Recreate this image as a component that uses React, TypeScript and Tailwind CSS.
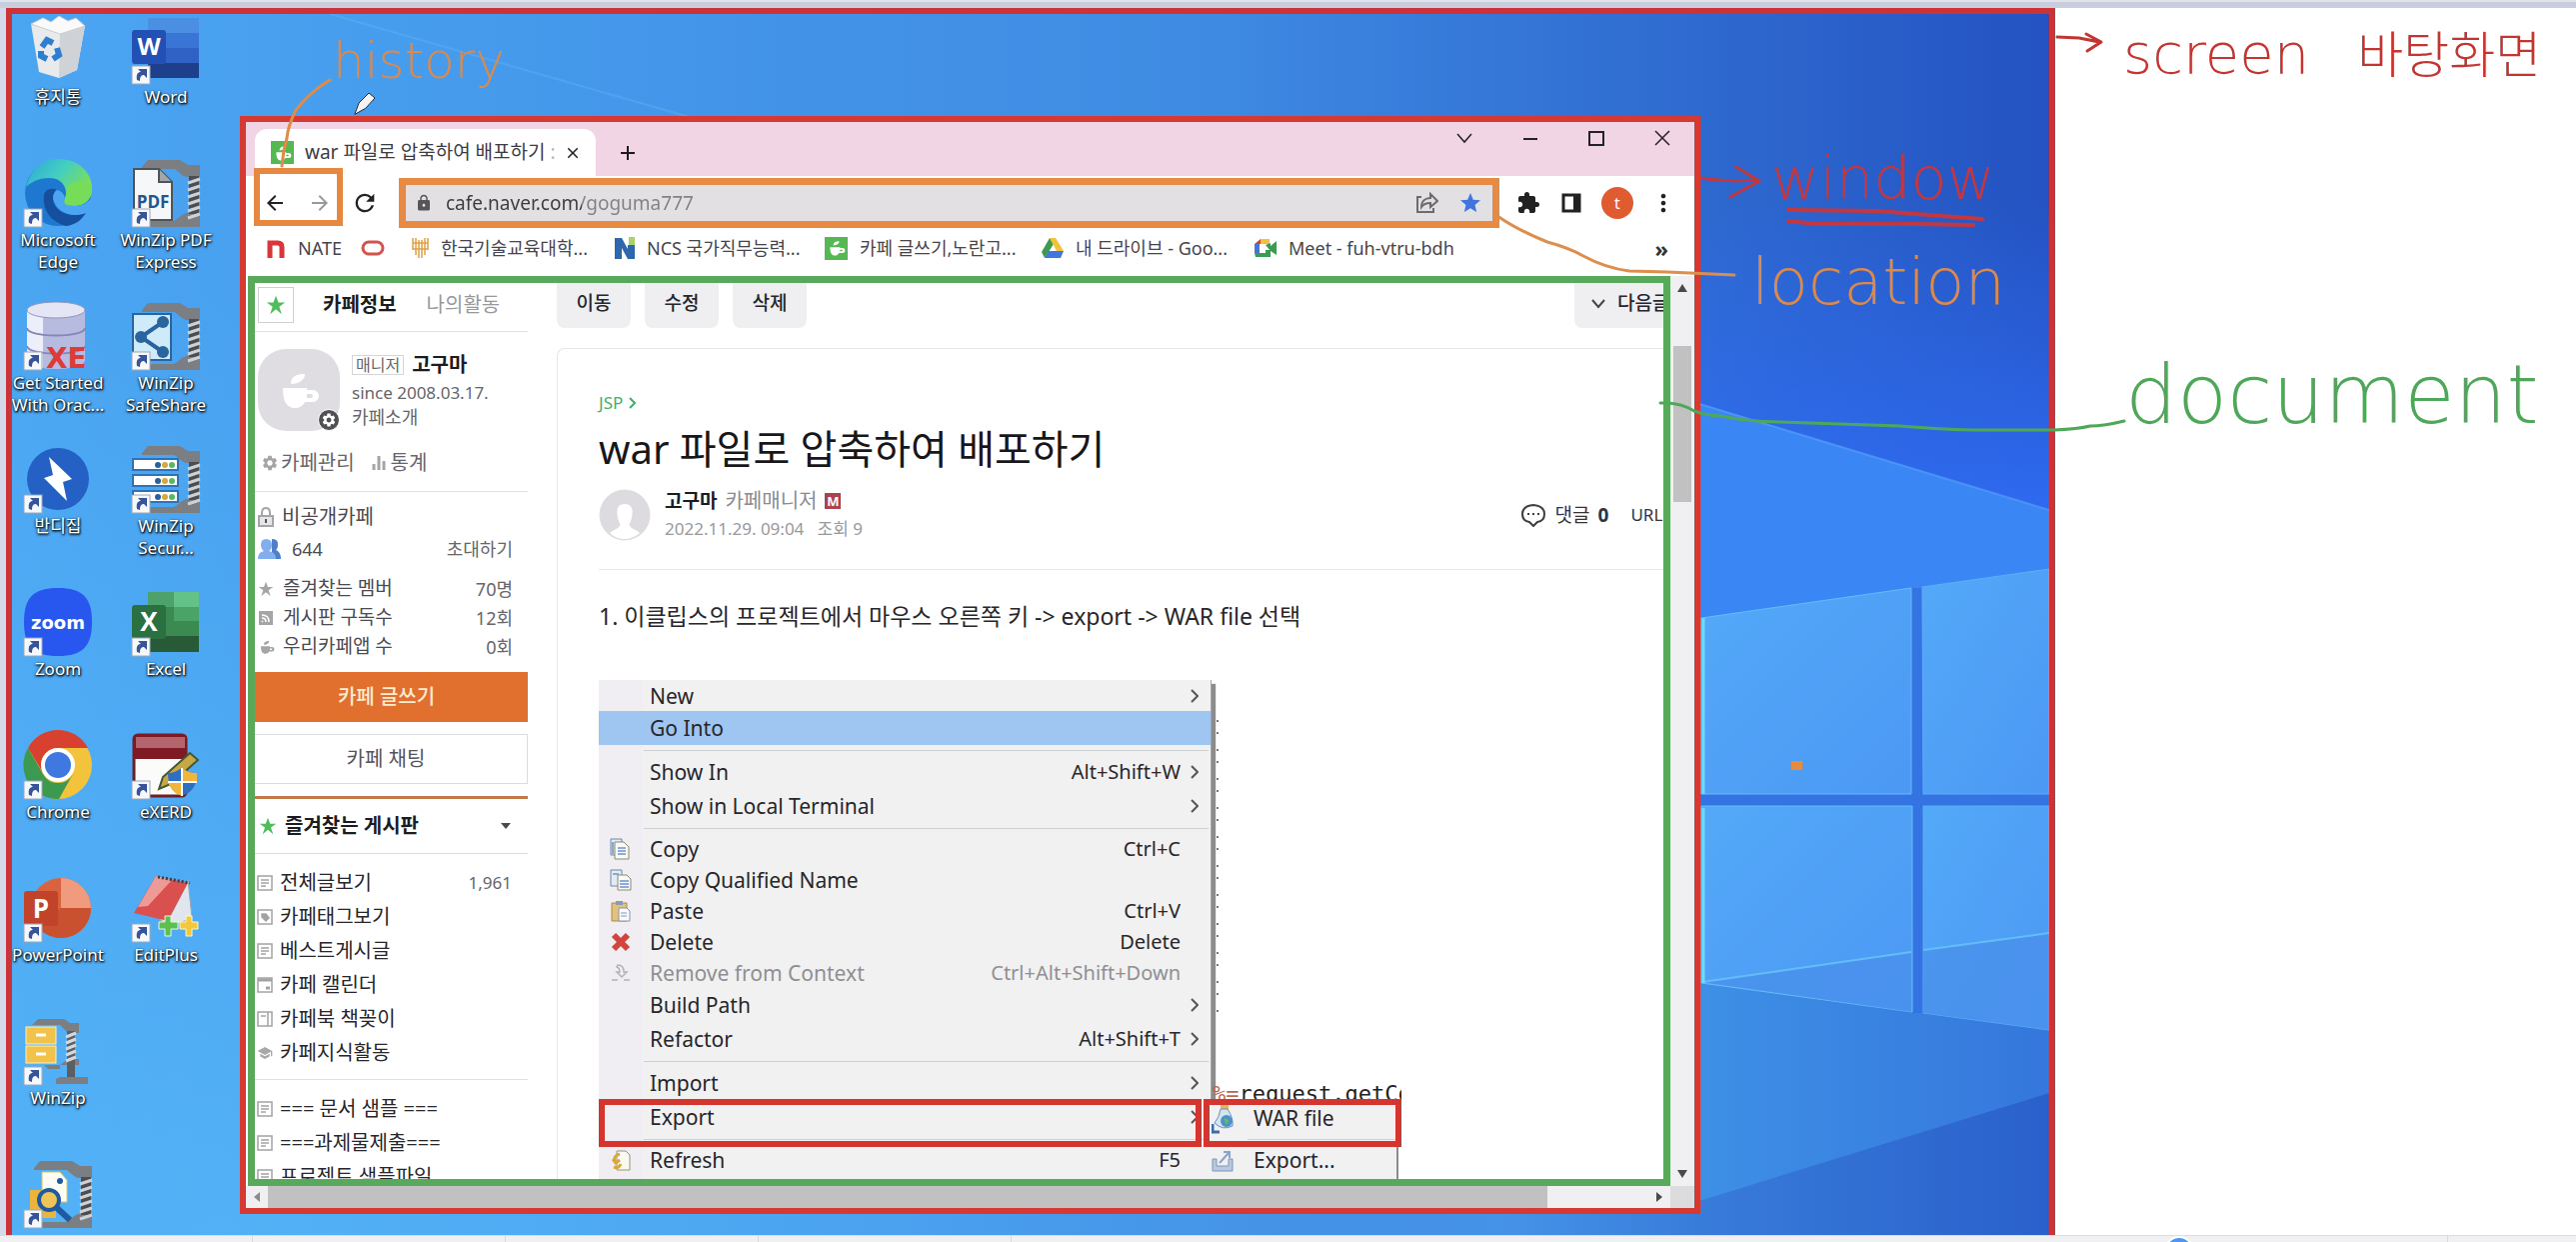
import React from "react";
import {
  MdAdd,
  MdArrowBack,
  MdArrowForward,
  MdClose,
  MdExtension,
  MdLock,
  MdMoreVert,
  MdRefresh,
  MdSchool,
  MdSettings,
  MdStar,
} from "react-icons/md";

/* ---------- desktop icons ---------- */

const Shortcut = () => (
  <g>
    <rect x="0" y="50" width="18" height="18" fill="#f7f8fa" stroke="#9aa9bb" strokeWidth="1" />
    <path d="M5 64c-1-6 1-8 4-8l-3-3h9v9l-3-3c-3 0-4 2-4 6z" fill="#36549a" />
  </g>
);

const IconBox = ({ children, plain }: { children: React.ReactNode; plain?: boolean }) => (
  <svg viewBox="0 0 68 68" className="size-[68px] shrink-0 overflow-visible">
    {children}
    {!plain && <Shortcut />}
  </svg>
);

const Clamp = () => (
  <g>
    <path d="M10 8 16 1h32l8 5h12v12H54c-6-2-8-7-12-8H10z" fill="#7b7e82" />
    <path d="M10 68h48l-2 0h12V54H54c-5 2-8 6-12 8H16z" fill="#7b7e82" />
    <rect x="57" y="17" width="10" height="38" fill="#4b4d50" />
    <path d="m56 24 12-4m-12 11 12-4m-12 11 12-4m-12 11 12-4m-12 11 12-4m-12 11 12-4" stroke="#cfd2d5" strokeWidth="3" />
  </g>
);

const TrashIcon = () => (
  <IconBox plain>
    <path d="m7 8 54 2-8 44-18 8-20-6z" fill="#e9eaec" />
    <path d="M36 14 61 10l-8 44-18 8z" fill="#cfd2d6" />
    <path d="m7 8 12-6 8 4 8-6 9 5 8-3 9 8-25 8z" fill="#fafafa" stroke="#c9ccd0" strokeWidth="1" />
    <path d="m18 31 5-7 6 3m4 5 2 7-6 4m-6 0-6-3 0-5" fill="none" stroke="#2f7fd0" strokeWidth="6" />
  </IconBox>
);
const EdgeIcon = () => (
  <IconBox>
    <defs>
      <linearGradient id="edgeTop" x1="0" x2="1" y1="0" y2="0.6">
        <stop offset="0" stopColor="#2ba6dc" />
        <stop offset="0.5" stopColor="#43cfc0" />
        <stop offset="1" stopColor="#86e04b" />
      </linearGradient>
    </defs>
    <circle cx="34" cy="34" r="33" fill="#1e78cf" />
    <path d="M2 28C7 8 21 0 35 0c20 0 33 14 33 29 0 12-8 18-18 17-9 0-11-3-9-7 3-6 0-20-16-20C14 19 6 24 2 28z" fill="url(#edgeTop)" />
    <path d="M20 36c-2 16 8 27 22 31 10-1 17-7 21-15-18 9-34 0-34-13 0-4 2-7 4-8-6-3-12 0-13 5z" fill="#174f9f" />
    <path d="M41 40c-2 4 1 7 9 7 8 0 14-3 17-8l1 12-6 3c-16 6-31-2-33-15 0-4 2-7 4-8 5 1 8 5 8 9z" fill="#4ba5f2" />
    <path d="M41 40c-2 4 0 7 9 7 10 0 18-6 18-17l-6-8-14 2c-7 4-4 10-7 16z" fill="#77dc58" />
  </IconBox>
);
const OracleIcon = () => (
  <IconBox>
    <path d="M3 8v50c0 12 58 12 58 0V8z" fill="#b7bbdf" />
    <path d="M3 8v50c0 4 7 7 16 8V12z" fill="#eceefa" />
    <ellipse cx="32" cy="8" rx="29" ry="8" fill="#e4e6f6" stroke="#8f93be" />
    <path d="M3 26c0 10 58 10 58 0M3 44c0 10 58 10 58 0" fill="none" stroke="#8387b8" strokeWidth="2" />
    <text x="22" y="66" className="font-['DejaVu_Sans'] text-[28px] font-bold" fill="#dc3b38">XE</text>
  </IconBox>
);
const BandizipIcon = () => (
  <IconBox>
    <circle cx="34" cy="34" r="31" fill="#2560c4" />
    <path d="m25 12 23 22-9 3 4 19-23-23 9-3z" fill="#fff" />
  </IconBox>
);
const ZoomIcon = () => (
  <IconBox>
    <path d="M34 0c25 0 34 10 34 34S59 68 34 68 0 58 0 34 9 0 34 0z" fill="#2757ee" />
    <text x="34" y="41" textAnchor="middle" className="font-['DejaVu_Sans'] text-[18px] font-bold" fill="#fff">zoom</text>
  </IconBox>
);
const ChromeIcon = () => (
  <IconBox>
    <circle cx="34" cy="34" r="34" fill="#f3c33c" />
    <path d="M4 17A34 34 0 0 1 64 17H34A17 17 0 0 0 19 42z" fill="#d8412f" />
    <path d="M4 17A34 34 0 0 0 35 68L49 43A17 17 0 0 1 19 43z" fill="#3c9a50" />
    <circle cx="34" cy="34" r="17" fill="#fff" />
    <circle cx="34" cy="34" r="13" fill="#3f78e0" />
  </IconBox>
);
const PowerPointIcon = () => (
  <IconBox>
    <circle cx="37" cy="34" r="30" fill="#d9623f" />
    <path d="M37 4a30 30 0 0 1 30 30H37z" fill="#f09a7e" />
    <path d="M37 34h30a30 30 0 0 1-56 15z" fill="#c9512f" />
    <rect x="0" y="17" width="34" height="35" rx="3" fill="#c0432a" />
    <text x="17" y="44" textAnchor="middle" className="font-['Open_Sans'] text-[26px] font-bold" fill="#fff">P</text>
  </IconBox>
);
const WinZipIcon = () => (
  <IconBox>
    <path d="M8 8 14 2h26l6 4h9v10H44L36 8z" fill="#7b7e82" />
    <path d="M20 48h35v-6H44l-8 6v4H24zM36 60h28v7H32v-5z" fill="#7b7e82" />
    <rect x="43" y="14" width="8" height="46" fill="#5b5e62" />
    <path d="m42 20 10-4m-10 10 10-4m-10 10 10-4m-10 10 10-4m-10 10 10-4" stroke="#d5d8db" strokeWidth="3" />
    <rect x="2" y="10" width="30" height="17" fill="#f2c34a" stroke="#fff1bd" strokeWidth="1" />
    <rect x="2" y="29" width="30" height="17" fill="#f2c34a" stroke="#fff1bd" strokeWidth="1" />
    <path d="M12 18h10M12 37h10" stroke="#fff" strokeWidth="3" />
  </IconBox>
);
const WinZipSearchIcon = () => (
  <IconBox>
    <Clamp />
    <path d="M18 12h18l7 8v22H18z" fill="#fdfdf5" stroke="#d6c36c" />
    <path d="M6 30h26v28H6z" fill="#eab53e" />
    <circle cx="25" cy="40" r="10" fill="#f0c558" stroke="#1f5aa0" strokeWidth="4" />
    <path d="m33 48 13 12" stroke="#1f5aa0" strokeWidth="6" />
    <circle cx="36" cy="21" r="3" fill="#1f5aa0" />
  </IconBox>
);
const WordIcon = () => (
  <IconBox>
    <rect x="16" y="2" width="51" height="60" rx="2" fill="#2f62c4" />
    <path d="M16 2h51v15H16z" fill="#4a8fe2" />
    <path d="M16 17h51v15H16z" fill="#3a74d4" />
    <path d="M16 47h51v15H16z" fill="#1e3f8c" />
    <rect x="0" y="14" width="34" height="34" rx="3" fill="#2350b4" />
    <text x="17" y="39" textAnchor="middle" className="font-['Open_Sans'] text-[24px] font-bold" fill="#fff">W</text>
  </IconBox>
);
const PdfIcon = () => (
  <IconBox>
    <Clamp />
    <path d="M2 10h25l13 13v38H2z" fill="#f6f7f9" stroke="#4e5458" strokeWidth="2" />
    <path d="M27 10v13h13" fill="#a3a7aa" stroke="#4e5458" strokeWidth="2" />
    <text x="21" y="49" textAnchor="middle" className="font-['Open_Sans'] text-[17px] font-bold" fill="#23568f">PDF</text>
  </IconBox>
);
const ShareIcon = () => (
  <IconBox>
    <Clamp />
    <rect x="1" y="12" width="38" height="46" fill="#cfeaf8" stroke="#2a649e" strokeWidth="2" />
    <path d="M31 20 9 35l22 15" fill="none" stroke="#2a649e" strokeWidth="4" />
    <circle cx="31" cy="20" r="6" fill="#2a649e" />
    <circle cx="9" cy="35" r="6" fill="#2a649e" />
    <circle cx="31" cy="50" r="6" fill="#2a649e" />
  </IconBox>
);
const SecureIcon = () => (
  <IconBox>
    <Clamp />
    {[14, 30, 46].map((y) => (
      <g key={y}>
        <rect x="1" y={y} width="45" height="11" fill="#fff" stroke="#2a74b8" strokeWidth="2" />
        <circle cx="26" cy={y + 6} r="3" fill="#2a5f9e" />
        <circle cx="33" cy={y + 6} r="3" fill="#d9a63a" />
        <circle cx="40" cy={y + 6} r="3" fill="#59b768" />
      </g>
    ))}
  </IconBox>
);
const ExcelIcon = () => (
  <IconBox>
    <rect x="16" y="4" width="51" height="60" rx="2" fill="#3b8a51" />
    <path d="M16 4h26v15H16z" fill="#4ca26a" />
    <path d="M42 4h25v15H42z" fill="#63c288" />
    <path d="M42 19h25v14H42z" fill="#4aa468" />
    <path d="M16 48h51v16H16z" fill="#285a38" />
    <rect x="0" y="17" width="34" height="34" rx="3" fill="#2a7040" />
    <text x="17" y="43" textAnchor="middle" className="font-['Open_Sans'] text-[26px] font-bold" fill="#fff">X</text>
  </IconBox>
);
const ExerdIcon = () => (
  <IconBox>
    <rect x="2" y="4" width="52" height="61" rx="4" fill="#fbfbf9" stroke="#6f1d26" strokeWidth="3" />
    <path d="M2 8q0-5 5-5h43q5 0 5 5v20H2z" fill="#7f1a24" />
    <path d="M4 6h49v11H4z" fill="#b4646c" />
    <path d="m27 58 4-12 27-24 8 7-27 24z" fill="#c9a745" stroke="#3f5a32" strokeWidth="2" />
    <path d="M36 42c5 0 9-2 14-5 4 3 9 5 15 5 0 12-4 19-15 23-10-4-14-11-14-23z" fill="#2e6fc4" />
    <path d="M50 37c4 3 9 5 15 5v9H50zM36 51h14v14c-8-3-12-8-14-14z" fill="#f0b53c" />
    <path d="M50 37v28M36 51h29" stroke="#fff" strokeWidth="2" />
  </IconBox>
);
const EditPlusIcon = () => (
  <IconBox>
    <path d="m56 6 4 38-20 8-12-6z" fill="#dfe6ee" stroke="#9aa8b8" />
    <path d="M24 2 56 9 36 47 2 39z" fill="#d9504e" />
    <path d="M24 2 40 6 16 32 6 33z" fill="#ee9a96" />
    <path d="m26 3 32 6" stroke="#3c3c40" strokeWidth="3" strokeDasharray="2 2" />
    <path d="M27 48h6v-6h6v6h7v7h-7v7h-6v-7h-6z" fill="#5cc04e" stroke="#eaf7e4" />
    <path d="M48 48h6v-6h6v6h6v7h-6v7h-6v-7h-6z" fill="#f3c83a" stroke="#fff6cf" />
  </IconBox>
);

const desktopIcons: { label: string[]; icon: React.ReactNode }[][] = [
  [
    { label: ["휴지통"], icon: <TrashIcon /> },
    { label: ["Microsoft", "Edge"], icon: <EdgeIcon /> },
    { label: ["Get Started", "With Orac..."], icon: <OracleIcon /> },
    { label: ["반디집"], icon: <BandizipIcon /> },
    { label: ["Zoom"], icon: <ZoomIcon /> },
    { label: ["Chrome"], icon: <ChromeIcon /> },
    { label: ["PowerPoint"], icon: <PowerPointIcon /> },
    { label: ["WinZip"], icon: <WinZipIcon /> },
    { label: [], icon: <WinZipSearchIcon /> },
  ],
  [
    { label: ["Word"], icon: <WordIcon /> },
    { label: ["WinZip PDF", "Express"], icon: <PdfIcon /> },
    { label: ["WinZip", "SafeShare"], icon: <ShareIcon /> },
    { label: ["WinZip", "Secur..."], icon: <SecureIcon /> },
    { label: ["Excel"], icon: <ExcelIcon /> },
    { label: ["eXERD"], icon: <ExerdIcon /> },
    { label: ["EditPlus"], icon: <EditPlusIcon /> },
  ],
];

const DesktopIcons = () => (
  <div className="flex w-[228px] shrink-0 overflow-hidden pt-[2px]">
    {desktopIcons.map((col, i) => (
      <ul key={i} className="w-[92px] shrink-0 odd:mr-4">
        {col.map((it, j) => (
          <li key={j} className="flex h-[143px] flex-col items-center">
            <button className="flex flex-col items-center">
              {it.icon}
              <span className="mt-[2px] text-center text-[17px] leading-[22px] whitespace-nowrap text-white [text-shadow:1px_1px_2px_#000,0_1px_3px_#000]">
                {it.label.map((l) => (
                  <span key={l} className="block">{l}</span>
                ))}
              </span>
            </button>
          </li>
        ))}
      </ul>
    ))}
  </div>
);

const Wallpaper = () => (
  <svg viewBox="12 14 2038 1221" preserveAspectRatio="none" className="absolute inset-0 size-full">
    <defs>
      <linearGradient id="sky" x1="0" x2="1" y1="0" y2="0">
        <stop offset="0" stopColor="#4ba6f2" />
        <stop offset="0.3" stopColor="#4497ea" />
        <stop offset="0.58" stopColor="#3f8be3" />
        <stop offset="0.82" stopColor="#2f6bd0" />
        <stop offset="1" stopColor="#2452c2" />
      </linearGradient>
      <radialGradient id="low" cx="0.1" cy="1" r="0.8">
        <stop offset="0" stopColor="#55b5f8" stopOpacity="0.8" />
        <stop offset="1" stopColor="#55b5f8" stopOpacity="0" />
      </radialGradient>
      <linearGradient id="deep" x1="0" x2="0" y1="0" y2="1">
        <stop offset="0" stopColor="#2f6bf0" stopOpacity="0" />
        <stop offset="1" stopColor="#2f6cf5" stopOpacity="0.9" />
      </linearGradient>
      <linearGradient id="pane" x1="0" x2="1" y1="0" y2="1">
        <stop offset="0" stopColor="#53a9f8" />
        <stop offset="1" stopColor="#4c98f4" />
      </linearGradient>
      <linearGradient id="floor" x1="0" x2="1" y1="0" y2="0">
        <stop offset="0" stopColor="#3e90e6" />
        <stop offset="1" stopColor="#3577dc" />
      </linearGradient>
      <linearGradient id="corner" x1="0" x2="1" y1="0" y2="0">
        <stop offset="0" stopColor="#4593e8" />
        <stop offset="0.4" stopColor="#377ad9" />
        <stop offset="1" stopColor="#2a60cb" />
      </linearGradient>
      <linearGradient id="horizon" x1="0" x2="1" y1="0" y2="0">
        <stop offset="0" stopColor="#4593e8" stopOpacity="0" />
        <stop offset="1" stopColor="#4593e8" />
      </linearGradient>
    </defs>
    <rect x="12" y="14" width="2038" height="1221" fill="url(#sky)" />
    <rect x="12" y="14" width="2038" height="1221" fill="url(#low)" />
    <path d="M330 14 700 120" stroke="#6ab8f8" strokeWidth="2" opacity="0.35" />
    <rect x="1700" y="200" width="350" height="310" fill="url(#deep)" />
    <path d="M1690 400 2050 510v500H1690z" fill="#3a86f4" />
    <path d="M1700 404 2050 510" stroke="#58a0f8" strokeWidth="2" opacity="0.6" />
    <path d="M1690 794h360v14h-360zM1912 588h12v425h-12z" fill="#3473e2" />
    <path d="M1690 980 2050 1030v205H1690z" fill="url(#floor)" />
    <path d="M1912 1000h12v13h-12z" fill="#3473e2" />
    <path d="M900 1200h600v35H900z" fill="url(#horizon)" />
    <path d="M1690 1204 2050 1093v142H1500v-35z" fill="url(#corner)" />
    <path d="M1702 618 1912 588V794H1702z" fill="url(#pane)" stroke="#64bdf9" strokeWidth="1" />
    <path d="M1923 587 2050 569V794H1924z" fill="url(#pane)" stroke="#5bb0f8" strokeWidth="1" />
    <path d="M1702 806H1913V1012L1702 983z" fill="url(#pane)" stroke="#64bdf9" strokeWidth="1" />
    <path d="M1924 806H2050V1030L1924 1013z" fill="url(#pane)" stroke="#5bb0f8" strokeWidth="1" />
    <path d="m1703 982 209-30v60zM1924 950l126-17v97l-126-17z" fill="#488fea" opacity="0.7" />
    <path d="m1703 982 209-30M1924 950l126-17" stroke="#62bef9" strokeWidth="2" />
    <path d="M1704 618V794M1704 808V983" stroke="#6ddcf8" strokeWidth="3" />
  </svg>
);

/* ---------- small page icons ---------- */

const CupMark = ({ className }: { className: string }) => (
  <svg viewBox="0 0 24 24" className={className}>
    <path d="M4 11h12v1h3a3 3 0 0 1 0 6h-4c-1 2-3 3-5 3-4 0-6-3-6-10zm12 3v2h2a1 1 0 0 0 0-2zM8 9c0-4 3-5 7-5 0 3-3 5-7 5z" fill="currentColor" />
  </svg>
);

const CafeFavicon = () => (
  <span className="flex size-[23px] shrink-0 items-center justify-center bg-[#54b953] text-white">
    <CupMark className="size-5" />
  </span>
);

const Star = ({ className }: { className: string }) => (
  <svg viewBox="0 0 24 24" className={className}>
    <path d="m12 1 3 8h8l-7 5 3 9-7-6-7 6 3-9-7-5h8z" fill="currentColor" />
  </svg>
);

const Triangle = ({ d }: { d: string }) => (
  <svg viewBox="0 0 10 10" className="size-[10px]">
    <path d={d} fill="#4a4a4a" />
  </svg>
);

type ListKind = "doc" | "tag" | "cal" | "book" | "cap";
const ListIcon = ({ kind }: { kind: ListKind }) => {
  if (kind === "cap") return <MdSchool className="size-4 shrink-0 text-[#a8a8aa]" />;
  return (
    <svg viewBox="0 0 16 16" className="size-4 shrink-0" fill="none" stroke="#a3a3a6" strokeWidth="1.500">
      <rect x="1" y="1" width="14" height="14" />
      {kind === "doc" && <path d="M4 5h8M4 8h8M4 11h5" />}
      {kind === "tag" && <path d="M5 5h4l3 4-3 3-4-4z" fill="#a3a3a6" />}
      {kind === "cal" && <path d="M1 3h14M9 11h4" strokeWidth="3" />}
      {kind === "book" && <path d="M11 1v14M4 5h5" />}
    </svg>
  );
};

/* ---------- browser chrome ---------- */

const TabStrip = () => (
  <div className="flex h-[54px] items-end bg-[#f2d5e4] pl-[9px]">
    <div className="flex h-[47px] w-[341px] items-center rounded-t-xl bg-white pr-[14px] pl-4">
      <CafeFavicon />
      <span className="ml-[11px] flex-1 text-[19px] whitespace-nowrap text-[#3c3c44]">
        war 파일로 압축하여 배포하기 <span className="text-[#b5b5b5]">:</span>
      </span>
      <button aria-label="탭 닫기"><MdClose className="size-[18px] text-[#222]" /></button>
    </div>
    <button aria-label="새 탭" className="mb-[11px] ml-5"><MdAdd className="size-6 text-[#1c1c1c]" /></button>
    <div className="mb-[30px] ml-auto flex items-center gap-[50px] pr-6 text-[#222]">
      <button aria-label="탭 검색">
        <svg viewBox="0 0 16 16" className="size-4"><path d="m1 4 7 8 7-8" fill="none" stroke="currentColor" strokeWidth="1.500" /></svg>
      </button>
      <button aria-label="최소화">
        <svg viewBox="0 0 16 16" className="size-4"><path d="M1 9h14" stroke="currentColor" strokeWidth="2" /></svg>
      </button>
      <button aria-label="최대화">
        <svg viewBox="0 0 16 16" className="size-4"><path d="M1 2h14v13H1z" fill="none" stroke="currentColor" strokeWidth="2" /></svg>
      </button>
      <button aria-label="닫기">
        <svg viewBox="0 0 16 16" className="size-4"><path d="m1 1 14 14M15 1 1 15" stroke="currentColor" strokeWidth="1.500" /></svg>
      </button>
    </div>
  </div>
);

const Toolbar = () => (
  <div className="flex h-[54px] items-center pr-[17px] pl-[17px]">
    <div className="relative flex gap-[21px]">
      <button aria-label="뒤로"><MdArrowBack className="size-6 text-[#222]" /></button>
      <button aria-label="앞으로"><MdArrowForward className="size-6 text-[#999]" /></button>
      <span className="absolute -top-[23px] -left-[9px] h-[58px] w-[89px] border-[6px] border-[#e8873f]" />
    </div>
    <button aria-label="새로고침" className="ml-[19px]"><MdRefresh className="size-[28px] text-[#222]" /></button>
    <div className="ml-5 flex h-[50px] flex-1 items-center border-[7px] border-[#e98a42] bg-[#e2e0e3] pr-[10px] pl-[9px]">
      <MdLock className="size-[18px] text-[#55555a]" />
      <input
        aria-label="주소창"
        defaultValue="cafe.naver.com/goguma777"
        className="ml-[13px] min-w-0 flex-1 bg-[linear-gradient(90deg,#3b3b40_136px,#808086_136px)] bg-clip-text text-[19px] text-transparent outline-none"
      />
      <button aria-label="공유">
        <svg viewBox="0 0 22 22" className="mr-5 size-[22px]" fill="none" stroke="#6b6b70" strokeWidth="2">
          <path d="M5 5H1v15h16v-4M5 15c0-6 4-9 9-9V2l7 7-7 6v-4c-4 0-7 1-9 4z" />
        </svg>
      </button>
      <button aria-label="북마크"><MdStar className="size-6 text-[#3f74de]" /></button>
    </div>
    <div className="ml-[17px] flex items-center gap-5 text-[#222]">
      <button aria-label="확장 프로그램"><MdExtension className="size-6" /></button>
      <button aria-label="측면 패널" className="ml-px">
        <svg viewBox="0 0 20 20" className="size-5"><path d="M2 2h16v16H2z" fill="none" stroke="currentColor" strokeWidth="3" /><path d="M12 1h7v18h-7z" fill="currentColor" /></svg>
      </button>
      <button aria-label="프로필" className="flex size-8 items-center justify-center rounded-full bg-[#e05c30] text-base text-white">t</button>
      <button aria-label="메뉴" className="-ml-1"><MdMoreVert className="size-7" /></button>
    </div>
  </div>
);

const bookmarks: { label: string; icon: React.ReactNode; w: string }[] = [
  { label: "NATE", w: "w-[95px]", icon: <svg viewBox="0 0 20 20" className="size-5"><path d="M4 20V5h8q4 0 4 4v11" fill="none" stroke="#d9363a" strokeWidth="5" /></svg> },
  { label: "", w: "w-[50px]", icon: <svg viewBox="0 0 24 16" className="h-4 w-6"><rect x="2" y="2" width="20" height="12" rx="6" fill="none" stroke="#d0554e" strokeWidth="3" /></svg> },
  { label: "한국기술교육대학...", w: "w-[204px]", icon: <svg viewBox="0 0 18 22" className="h-[22px] w-[18px]"><path d="M2 1v12M5 1v17M8 3v18M11 3v18M14 1v17M17 1v12M2 6h15M2 12h15" stroke="#dfa046" strokeWidth="1.500" /></svg> },
  { label: "NCS 국가직무능력...", w: "w-[210px]", icon: <svg viewBox="0 0 20 22" className="h-[22px] w-5"><path d="M0 1h7l6 11V8h7v14h-7L7 11v11H0z" fill="#2d68ad" /><path d="M14 0h6v8h-6z" fill="#a9d26b" /></svg> },
  { label: "카페 글쓰기,노란고...", w: "w-[217px]", icon: <CafeFavicon /> },
  { label: "내 드라이브 - Goo...", w: "w-[213px]", icon: <svg viewBox="0 0 22 20" className="h-5 w-[22px]"><path d="M8 0 0 14l3 6 9-14z" fill="#3c9b50" /><path d="M8 0h6l8 13h-7z" fill="#f2c238" /><path d="M7 13h15l-3 7H3z" fill="#3f77df" /></svg> },
  { label: "Meet - fuh-vtru-bdh", w: "w-[220px]", icon: <svg viewBox="0 0 22 20" className="h-5 w-[22px]"><path d="M6 1h9v5H6z" fill="#f2c238" /><path d="M0 6 6 1v5z" fill="#d9412f" /><path d="M0 6h5v9H0z" fill="#3f77df" /><path d="M0 15h5v4H1zM5 15h6v-3h5v7H5zM11 7l5-2v8zM16 8l6-5v14l-6-4z" fill="#3c9b50" /></svg> },
];

const BookmarkBar = () => (
  <nav className="mb-[10px] flex h-9 items-center pr-[26px] pl-5 text-lg whitespace-nowrap text-[#45454d]">
    {bookmarks.map((b) => (
      <a key={b.label} href="#" aria-label={b.label || "북마크"} className={`${b.w} flex shrink-0 items-center gap-3`}>
        {b.icon}
        {b.label}
      </a>
    ))}
    <button aria-label="북마크 더보기" className="ml-auto text-[22px] leading-5 font-bold text-[#333]">»</button>
  </nav>
);

/* ---------- cafe page ---------- */

const boards: { t: string; k: ListKind; n?: string }[] = [
  { t: "전체글보기", k: "doc", n: "1,961" },
  { t: "카페태그보기", k: "tag" },
  { t: "베스트게시글", k: "doc" },
  { t: "카페 캘린더", k: "cal" },
  { t: "카페북 책꽂이", k: "book" },
  { t: "카페지식활동", k: "cap" },
];
const samples: { t: string; k: ListKind; n?: string }[] = [
  { t: "=== 문서 샘플 ===", k: "doc" },
  { t: "===과제물제출===", k: "doc" },
  { t: "프로젝트 샘플파일", k: "doc" },
];

const BoardList = ({ items }: { items: typeof boards }) => (
  <ul className="pt-3 pr-4 pl-[2px]">
    {items.map((b) => (
      <li key={b.t} className="flex h-[34px] items-center">
        <ListIcon kind={b.k} />
        <a href="#" className="ml-[7px] text-xl text-[#26262c]">{b.t}</a>
        {b.n && <span className="ml-auto text-[17px] text-[#66666b]">{b.n}</span>}
      </li>
    ))}
  </ul>
);

const stats: { icon: React.ReactNode; t: string; n: string }[] = [
  { icon: <Star className="size-4 text-[#a5a5a8]" />, t: "즐겨찾는 멤버", n: "70명" },
  { icon: <svg viewBox="0 0 16 16" className="size-4"><path d="M1 1h14v14H1z" fill="#a5a5a8" /><path d="M4 8q4 0 4 4M4 5q7 0 7 7M4 11l1 1" fill="none" stroke="#fff" strokeWidth="1.500" /></svg>, t: "게시판 구독수", n: "12회" },
  { icon: <CupMark className="size-[18px] text-[#a5a5a8]" />, t: "우리카페앱 수", n: "0회" },
];

const Sidebar = () => (
  <aside className="w-[273px] shrink-0">
    <div className="flex h-[49px] items-center border-b border-[#dfdfe1] pb-1 pl-[3px]">
      <button aria-label="즐겨찾기" className="flex size-9 items-center justify-center border border-[#d0d0d3]">
        <Star className="size-5 text-[#4fbd5c]" />
      </button>
      <button className="ml-[29px] text-xl font-bold text-[#1c1c20]">카페정보</button>
      <button className="ml-[30px] text-xl text-[#98989c]">나의활동</button>
    </div>
    <div className="flex h-[117px] gap-3 pt-[17px] pl-[3px]">
      <div className="relative flex size-[82px] items-center justify-center rounded-[28px] bg-[#dfdde1] text-white">
        <CupMark className="size-12" />
        <span className="absolute right-0 bottom-0 flex size-[22px] items-center justify-center rounded-full border border-white bg-[#505054]">
          <MdSettings className="size-4" />
        </span>
      </div>
      <div className="text-[#66666b]">
        <div className="flex h-8 items-center">
          <span className="border border-[#d6d6d9] px-[3px] text-base leading-[18px]">매니저</span>
          <b className="ml-2 text-xl text-[#1c1c20]">고구마</b>
        </div>
        <p className="text-[17px] leading-6">since 2008.03.17.</p>
        <a href="#" className="block text-lg leading-6">카페소개</a>
      </div>
    </div>
    <div className="flex h-[43px] items-start border-b border-[#dfdfe1] pl-[6px] text-xl leading-7 text-[#66666b]">
      <a href="#" className="flex items-center gap-[2px]"><MdSettings className="size-[18px] text-[#a5a5a8]" />카페관리</a>
      <a href="#" className="ml-4 flex items-center gap-1">
        <svg viewBox="0 0 16 16" className="size-4"><path d="M3 15V9M8 15V1M13 15V6" stroke="#a5a5a8" strokeWidth="3" /></svg>통계
      </a>
    </div>
    <div className="pt-3 pr-[15px] pl-[3px]">
      <div className="flex h-[26px] items-center gap-2 text-xl text-[#4b4b52]">
        <svg viewBox="0 0 16 20" className="h-5 w-4"><path d="M4 9V6q0-5 4-5t4 5v3" fill="none" stroke="#a5a5a8" strokeWidth="2" /><path d="M1 9h14v10H1z" fill="#e6e6e8" stroke="#a5a5a8" strokeWidth="2" /><path d="M8 12v4" stroke="#55555a" strokeWidth="2" /></svg>
        비공개카페
      </div>
      <div className="flex h-[38px] items-center text-lg text-[#4b4b52]">
        <svg viewBox="0 0 24 22" className="h-[22px] w-6"><path d="M14 1q6 0 6 5t-2 6q5 2 5 9h-9z" fill="#4f7fc9" /><path d="M8 1q6 0 6 6 0 4-3 6 7 1 7 8H0q0-7 6-8-3-2-3-6 0-6 5-6z" fill="#82aef0" /></svg>
        <span className="ml-[10px]">644</span>
        <a href="#" className="ml-auto text-[#66666b]">초대하기</a>
      </div>
      <ul className="pt-[6px] pb-[11px]">
        {stats.map((s) => (
          <li key={s.t} className="flex h-[29px] items-center text-[19px] text-[#4b4b52]">
            <span className="flex w-[25px]">{s.icon}</span>
            {s.t}
            <span className="ml-auto text-lg text-[#66666b]">{s.n}</span>
          </li>
        ))}
      </ul>
    </div>
    <button className="block h-[50px] w-full bg-[#e1702f] pr-[10px] text-xl font-medium text-[#fdeccf]">카페 글쓰기</button>
    <button className="mt-3 block h-[50px] w-full border border-l-0 border-[#dcdcdf] pr-[10px] text-xl text-[#55555b]">카페 채팅</button>
    <div className="mt-3 flex h-[58px] items-center border-t-[3px] border-b border-t-[#c47a48] border-b-[#dcdcdf] pr-[17px] pl-1">
      <Star className="size-[18px] text-[#4fbd5c]" />
      <b className="ml-2 text-xl text-[#1c1c20]">즐겨찾는 게시판</b>
      <button aria-label="접기" className="ml-auto"><Triangle d="M0 2h10L5 8z" /></button>
    </div>
    <BoardList items={boards} />
    <div className="mt-[9px] border-t border-[#dfdfe1]"><BoardList items={samples} /></div>
  </aside>
);

type MenuRow = { t: string; key?: string; arrow?: boolean; icon?: React.ReactNode; tall?: boolean; hot?: boolean; off?: boolean } | null;

const Sheets = ({ x }: { x: number }) => (
  <svg viewBox="0 0 22 22" className="size-[22px]">
    <path d="M1 1h11v16H1z" fill="#e3ecf6" stroke="#6f86a8" />
    <path d={x ? "M8 6h9l4 4v11H8z" : "M5 4h9l5 5v12H5z"} fill="#f7f9fc" stroke="#8f8a5c" />
    <path d={x ? "M10 12h9M10 15h9M10 18h9M3 5h6" : "M8 10h8M8 13h8M8 16h8M3 4v12"} stroke="#6d93c9" strokeWidth="1.500" />
  </svg>
);

const menuRows: MenuRow[] = [
  { t: "New", arrow: true },
  { t: "Go Into", hot: true, tall: true },
  null,
  { t: "Show In", key: "Alt+Shift+W", arrow: true, tall: true },
  { t: "Show in Local Terminal", arrow: true, tall: true },
  null,
  { t: "Copy", key: "Ctrl+C", icon: <Sheets x={0} /> },
  { t: "Copy Qualified Name", icon: <Sheets x={1} /> },
  { t: "Paste", key: "Ctrl+V", icon: <svg viewBox="0 0 22 22" className="size-[22px]"><path d="M2 3h15v18H2z" fill="#e3c27b" stroke="#a88a4c" /><path d="M6 1h7v4H6z" fill="#8f9ab0" /><path d="M9 8h8l3 3v10H9z" fill="#f9fafc" stroke="#8a94a5" /><path d="M11 13h6M11 16h6" stroke="#7f96b8" /></svg> },
  { t: "Delete", key: "Delete", icon: <svg viewBox="0 0 22 22" className="size-[22px]"><path d="m4 4 14 14M18 4 4 18" stroke="#d2453f" strokeWidth="6" /></svg> },
  { t: "Remove from Context", key: "Ctrl+Alt+Shift+Down", off: true, icon: <svg viewBox="0 0 22 22" className="size-[22px]"><path d="M8 3q6 0 6 7h3l-5 5-5-5h3q0-4-3-5zM2 18h6M14 18h6" fill="none" stroke="#b2b2b6" strokeWidth="1.500" /></svg> },
  { t: "Build Path", arrow: true, tall: true },
  { t: "Refactor", key: "Alt+Shift+T", arrow: true, tall: true },
  null,
  { t: "Import", arrow: true, tall: true },
  { t: "Export", arrow: true, tall: true },
  null,
  { t: "Refresh", key: "F5", icon: <svg viewBox="0 0 22 22" className="size-[22px]"><path d="M7 2h9l4 4v15H7z" fill="#fbfaf2" stroke="#9a9270" /><path d="M10 5q-7 2-5 8M3 10l3 4 4-3M4 18q5 2 7-3" fill="none" stroke="#d7a83a" strokeWidth="3" /></svg> },
];

const ContextMenu = () => (
  <div className="relative w-[803px] overflow-hidden">
    <div className="w-[613px] border-r border-[#a5a5a8] bg-[linear-gradient(90deg,#f0eef2_44px,#f1f1f1_44px)] pb-2 text-[21px] leading-7 text-[#26262b] shadow-[4px_4px_1px_#8c8c8c]">
      {menuRows.map((r, i) =>
        r === null ? (
          <div key={i} className="flex h-[10px] items-center pr-[2px] pl-[45px]"><hr className="w-full border-[#cfd1d1]" /></div>
        ) : (
          <button
            key={i}
            className={`flex w-full items-center pr-3 text-left ${r.tall ? "h-[34px]" : "h-[31px]"} ${r.hot ? "bg-[#9fc5f1]" : ""} ${r.off ? "text-[#8f8f93]" : ""}`}
          >
            <span className="flex w-[51px] shrink-0 pl-[11px]">{r.icon}</span>
            <span>{r.t}</span>
            <span className="ml-auto text-xl">{r.key}</span>
            <span className="flex w-[18px] justify-end">
              {r.arrow && (
                <svg viewBox="0 0 8 14" className="h-[14px] w-2"><path d="m1 1 6 6-6 6" fill="none" stroke="#55555a" strokeWidth="2" /></svg>
              )}
            </span>
          </button>
        ),
      )}
    </div>
    <div className="absolute top-10 left-[618px] h-[300px] w-[2px] bg-[repeating-linear-gradient(180deg,#77777a_0_2px,transparent_2px_12px,#77777a_12px_14px,transparent_14px_29px)]" />
    <pre className="absolute top-[398px] left-[614px] font-['DejaVu_Sans_Mono','Noto_Sans',monospace] text-[22px] leading-8 text-[#222]"><span className="text-[#c0664f]">%=</span>request.getCo</pre>
    <span className="absolute top-[419px] left-0 h-[48px] w-[603px] border-[6px] border-[#d5352f]" />
    <div className="absolute top-[419px] left-[605px] w-[195px] border-r-2 border-[#8c8c8c] bg-[#f1f1f1] text-[21px] text-[#26262b]">
      <button className="flex h-10 w-full items-center gap-[18px] pl-[8px]">
        <svg viewBox="0 0 24 30" className="h-[30px] w-6"><path d="M9 1h8v4H9z" fill="#e0b85a" /><path d="M9 5q-1 8-6 14 8 8 18 3 1-8-5-17z" fill="#d3e4f5" stroke="#6d8eb8" /><circle cx="15" cy="17" r="6" fill="#4e93c8" /><path d="m12 14 5 2-2 5z" fill="#6dbd5c" /><path d="M1 20v8h7" fill="none" stroke="#3e6cab" strokeWidth="3" /></svg>
        WAR file
      </button>
      <hr className="ml-11 border-[#cfd1d1]" />
      <button className="flex h-[42px] w-full items-center gap-5 pl-[8px]">
        <svg viewBox="0 0 22 22" className="size-[22px]"><path d="M1 9v12h20V9h-4v7H5V9z" fill="#b9c9e2" stroke="#7d93b8" /><path d="m8 13 9-10M12 2h6v6" fill="none" stroke="#8da2c4" strokeWidth="2" /></svg>
        Export...
      </button>
    </div>
    <span className="absolute top-[419px] left-[605px] h-[48px] w-[198px] border-[6px] border-[#d5352f]" />
  </div>
);

const Article = () => (
  <main className="ml-[29px] w-[1200px] shrink-0">
    <div className="flex text-[19px] font-medium text-[#26262c]">
      {["이동", "수정", "삭제"].map((t) => (
        <button key={t} className="mr-[14px] h-[45px] w-[74px] rounded-b-lg bg-[#efeef1] pb-1">{t}</button>
      ))}
      <button className="ml-auto flex h-[45px] w-[182px] items-center gap-3 rounded-b-lg bg-[#efeef1] pb-1 pl-[17px]">
        <svg viewBox="0 0 14 10" className="h-[10px] w-[14px]"><path d="m1 1 6 7 6-7" fill="none" stroke="#444" strokeWidth="2" /></svg>
        다음글
      </button>
    </div>
    <article className="mt-5 rounded-tl-lg border-t border-l border-[#e6e6e9] pt-[42px] pl-[41px]">
      <a href="#" className="flex items-center gap-[6px] text-[17px] leading-6 text-[#3fb164]">
        JSP
        <svg viewBox="0 0 8 12" className="h-3 w-2"><path d="m1 1 5 5-5 5" fill="none" stroke="currentColor" strokeWidth="2" /></svg>
      </a>
      <h1 className="mt-1 text-[40px] leading-[60px] text-[#17171b]">war 파일로 압축하여 배포하기</h1>
      <div className="mt-2 flex items-center">
        <svg viewBox="0 0 52 52" className="size-[52px]">
          <circle cx="26" cy="26" r="25" fill="#dddbdf" stroke="#dedee0" />
          <path d="M26 15c9 0 8 9 7 13-1 6-3 7-2 9 2 3 7 4 10 7-9 8-22 8-30 0 3-3 8-4 10-7 1-2-1-3-2-9-1-4-2-13 7-13z" fill="#fff" />
        </svg>
        <div className="ml-[14px]">
          <p className="flex items-center gap-2 text-xl leading-7 text-[#8b8b90]">
            <b className="text-[19px] text-[#1c1c20]">고구마</b>카페매니저
            <span className="flex size-4 items-center justify-center bg-[#a8434f] text-[13px] leading-4 font-bold text-white">M</span>
          </p>
          <p className="text-[17px] leading-7 text-[#99999d]">2022.11.29. 09:04&nbsp;&nbsp; 조회 9</p>
        </div>
        <div className="ml-auto flex items-center gap-[10px] pr-[58px] text-[19px] text-[#333338]">
          <svg viewBox="0 0 24 24" className="size-6"><path d="M12 2q11 1 11 9 0 7-7 8l-4 4-4-4q-7-1-7-8 0-8 11-9z" fill="none" stroke="#3d3d42" strokeWidth="2" /><path d="M6 11h2M11 11h2M16 11h2" stroke="#3d3d42" strokeWidth="2" /></svg>
          <a href="#" className="flex gap-2">댓글 <b>0</b></a>
          <a href="#" className="ml-3 whitespace-nowrap text-[17px]">URL 복사</a>
        </div>
      </div>
      <p className="mt-[26px] border-t border-[#e6e6e9] pt-[31px] text-[23px] leading-[30px] text-[#26262b]">
        1. 이클립스의 프로젝트에서 마우스 오른쪽 키 -&gt; export -&gt; WAR file 선택
      </p>
      <div className="mt-[49px]"><ContextMenu /></div>
    </article>
  </main>
);

const BrowserWindow = () => (
  <section className="relative mt-[102px] mr-[349px] mb-[21px] flex min-w-0 flex-1 flex-col border-[6px] border-[#d63832] bg-white">
    <TabStrip />
    <Toolbar />
    <BookmarkBar />
    <div className="flex min-h-0 flex-1">
      <div className="ml-[2px] flex min-w-0 flex-1 overflow-hidden border-[7px] border-[#58a95b] bg-white">
        <Sidebar />
        <Article />
      </div>
      <div className="flex w-6 flex-col items-center bg-[#f0eff2] py-[7px]">
        <Triangle d="M5 1 10 9H0z" />
        <div className="mt-[53px] h-[156px] w-[18px] bg-[#c1c1c2]" />
        <span className="mt-auto"><Triangle d="M0 1h10L5 9z" /></span>
      </div>
    </div>
    <div className="flex h-[22px] items-center bg-[#f0eff2]">
      <span className="flex w-[22px] justify-center opacity-60"><Triangle d="M8 0v10L2 5z" /></span>
      <div className="h-full flex-1 bg-[#c1c1c2]" />
      <span className="flex w-[123px] justify-end pr-[6px]"><Triangle d="M2 0v10l6-5z" /></span>
      <span className="h-full w-6 bg-[#dcdbde]" />
    </div>
  </section>
);

/* ---------- pen annotations over the screen ---------- */

const pen = "absolute font-['DejaVu_Sans','Noto_Sans_CJK_KR',sans-serif] font-extralight leading-none whitespace-nowrap";

const Annotations = () => (
  <div className="pointer-events-none absolute inset-0">
    <svg viewBox="0 0 2577 1242" preserveAspectRatio="none" className="absolute inset-0 size-full" fill="none" strokeWidth="3" strokeLinecap="round" strokeLinejoin="round">
      <path d="M330 80q-20 12-34 30-8 16-9 28-4 14-5 28" stroke="#e08c48" />
      <path d="M1498 216q20 14 50 26 22 6 36 14 22 12 46 15l38 1 67 3" stroke="#dd8d4c" />
      <path d="M1661 403q20-1 34 8 10 4 26 5 30 6 60 6l120 4q50 4 80 4h74q24-1 36-4 14 0 34-5" stroke="#4fa85a" />
      <path d="m2058 37 22 1 20 4m-13-8 15 8-14 9" stroke="#c23530" />
      <path d="M1703 178q20 4 55 2m-21-13 23 14-29 16" stroke="#c5373f" />
      <path d="m1789 210 90 1 50 4 54 4m-194 2 28 3h100l57 1" stroke="#c5373f" strokeWidth="4" />
      <path d="M1792 761h11v9h-11z" fill="#e48b45" stroke="none" />
      <path d="m355 114 4-11 10-10 6 5-9 10z" fill="#f4f4f4" stroke="#2c2c30" strokeWidth="1" />
    </svg>
    <span className={`${pen} top-[36px] left-[333px] text-[50px] text-[#dc8a4b]`}>history</span>
    <span className={`${pen} top-[26px] left-[2124px] text-[56px] text-[#c23530]`}>
      screen<span className="ml-12 text-[50px]">바탕화면</span>
    </span>
    <span className={`${pen} top-[149px] left-[1772px] text-[59px] text-[#c5373f]`}>window</span>
    <span className={`${pen} top-[250px] left-[1752px] text-[64px] text-[#dc8a4b]`}>location</span>
    <span className={`${pen} top-[354px] left-[2126px] text-[82px] text-[#4fa85a]`}>document</span>
  </div>
);

export default function App() {
  return (
    <div className="relative flex h-screen flex-col overflow-hidden bg-white font-['Noto_Sans','Noto_Sans_CJK_KR',sans-serif]">
      <div className="h-2 shrink-0 border-t-2 border-[#e1e4ea] bg-[#c8cedd]" />
      <div className="flex min-h-0 flex-1 bg-white">
        <div className="w-[6px] shrink-0 bg-[#d5daea]" />
        <div className="relative mr-[521px] flex min-w-0 flex-1 border-x-[6px] border-t-[6px] border-[#cb3338] bg-[#4ba6f2]">
          <Wallpaper />
          <div className="relative flex min-w-0 flex-1">
            <DesktopIcons />
            <BrowserWindow />
          </div>
        </div>
      </div>
      <div className="flex h-[7px] shrink-0 border-t border-[#dcdbdf] bg-[#f0eff2]">
        {[0, 1, 2, 3].map((i) => (
          <span key={i} className="w-[253px] border-r border-[#d9d9dc]" />
        ))}
        <span className="flex flex-1 justify-end border-r border-[#d9d9dc] pr-[253px]">
          <span className="size-[30px] rounded-full border-2 border-white bg-[#4a97f5]" />
        </span>
        <span className="w-[128px]" />
      </div>
      <Annotations />
    </div>
  );
}
